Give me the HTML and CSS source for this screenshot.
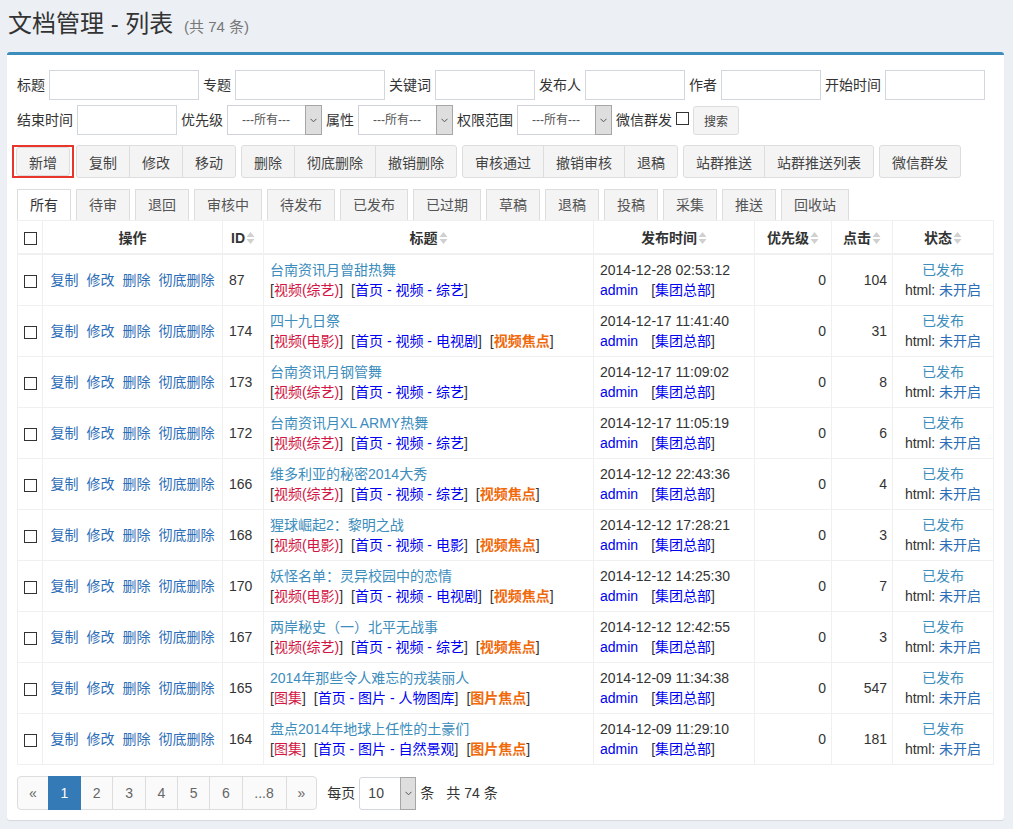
FILE: index.html
```html
<!DOCTYPE html>
<html lang="zh-CN">
<head>
<meta charset="utf-8">
<title>文档管理 - 列表</title>
<link rel="stylesheet" href="styles.css">
</head>
<body>
<div class="page">
  <h1 class="page-title">文档管理 - 列表 <small>(共 74 条)</small></h1>
  <div class="box">
    <form class="filters">
      <div class="frow">
        <label>标题</label><input class="inp w150" type="text">
        <label>专题</label><input class="inp w150" type="text">
        <label>关键词</label><input class="inp" type="text">
        <label>发布人</label><input class="inp" type="text">
        <label>作者</label><input class="inp" type="text">
        <label>开始时间</label><input class="inp" type="text">
      </div>
      <div class="frow">
        <label>结束时间</label><input class="inp" type="text">
        <label>优先级</label>
        <span class="sel"><select><option>---所有---</option></select><span class="arrow"><svg width="7" height="5" viewBox="0 0 7 5"><polyline points="0.5,0.8 3.5,3.8 6.5,0.8" fill="none" stroke="#555" stroke-width="1"/></svg></span></span>
        <label>属性</label>
        <span class="sel"><select><option>---所有---</option></select><span class="arrow"><svg width="7" height="5" viewBox="0 0 7 5"><polyline points="0.5,0.8 3.5,3.8 6.5,0.8" fill="none" stroke="#555" stroke-width="1"/></svg></span></span>
        <label>权限范围</label>
        <span class="sel"><select><option>---所有---</option></select><span class="arrow"><svg width="7" height="5" viewBox="0 0 7 5"><polyline points="0.5,0.8 3.5,3.8 6.5,0.8" fill="none" stroke="#555" stroke-width="1"/></svg></span></span>
        <label>微信群发</label><input class="chk chk-top" type="checkbox">
        <button type="button" class="btn-sm">搜索</button>
      </div>
    </form>

    <div class="toolbar">
      <span class="hl"><button type="button" class="btn btn-new">新增</button></span>
      <div class="btn-group first"><button type="button" class="btn">复制</button><button type="button" class="btn">修改</button><button type="button" class="btn">移动</button></div>
      <div class="btn-group"><button type="button" class="btn">删除</button><button type="button" class="btn">彻底删除</button><button type="button" class="btn">撤销删除</button></div>
      <div class="btn-group"><button type="button" class="btn">审核通过</button><button type="button" class="btn">撤销审核</button><button type="button" class="btn">退稿</button></div>
      <div class="btn-group"><button type="button" class="btn">站群推送</button><button type="button" class="btn">站群推送列表</button></div>
      <div class="btn-group"><button type="button" class="btn">微信群发</button></div>
    </div>

    <ul class="tabs">
      <li class="active">所有</li><li>待审</li><li>退回</li><li>审核中</li><li>待发布</li><li>已发布</li><li>已过期</li><li>草稿</li><li>退稿</li><li>投稿</li><li>采集</li><li>推送</li><li>回收站</li>
    </ul>

    <table class="grid">
      <colgroup>
        <col style="width:25px"><col style="width:180px"><col style="width:41px"><col style="width:330px"><col style="width:161px"><col style="width:77px"><col style="width:61px"><col style="width:101px">
      </colgroup>
      <thead>
        <tr>
          <th class="c-chk"><input class="chk" type="checkbox"></th>
          <th>操作</th>
          <th>ID<svg class="sort" width="9" height="14" viewBox="0 0 9 14"><polygon points="0.5,6 4.5,1 8.5,6" fill="#d0d0d0"/><polygon points="0.5,8 4.5,13 8.5,8" fill="#d0d0d0"/></svg></th>
          <th>标题<svg class="sort" width="9" height="14" viewBox="0 0 9 14"><polygon points="0.5,6 4.5,1 8.5,6" fill="#d0d0d0"/><polygon points="0.5,8 4.5,13 8.5,8" fill="#d0d0d0"/></svg></th>
          <th>发布时间<svg class="sort" width="9" height="14" viewBox="0 0 9 14"><polygon points="0.5,6 4.5,1 8.5,6" fill="#d0d0d0"/><polygon points="0.5,8 4.5,13 8.5,8" fill="#d0d0d0"/></svg></th>
          <th>优先级<svg class="sort" width="9" height="14" viewBox="0 0 9 14"><polygon points="0.5,6 4.5,1 8.5,6" fill="#d0d0d0"/><polygon points="0.5,8 4.5,13 8.5,8" fill="#d0d0d0"/></svg></th>
          <th>点击<svg class="sort" width="9" height="14" viewBox="0 0 9 14"><polygon points="0.5,6 4.5,1 8.5,6" fill="#d0d0d0"/><polygon points="0.5,8 4.5,13 8.5,8" fill="#d0d0d0"/></svg></th>
          <th>状态<svg class="sort" width="9" height="14" viewBox="0 0 9 14"><polygon points="0.5,6 4.5,1 8.5,6" fill="#d0d0d0"/><polygon points="0.5,8 4.5,13 8.5,8" fill="#d0d0d0"/></svg></th>
        </tr>
      </thead>
      <tbody>
        <tr>
          <td class="c-chk"><input class="chk" type="checkbox"></td>
          <td class="c-op"><a>复制</a><a>修改</a><a>删除</a><a>彻底删除</a></td>
          <td>87</td>
          <td><div><a class="tl">台南资讯月曾甜热舞</a></div><div>[<span class="cat">视频(综艺)</span>]<span class="sp">[<span class="chan">首页 - 视频 - 综艺</span>]</span></div></td>
          <td><div>2014-12-28 02:53:12</div><div><span class="user">admin</span><span class="org">[<span class="chan">集团总部</span>]</span></div></td>
          <td class="r">0</td>
          <td class="r">104</td>
          <td class="c"><div class="pub">已发布</div><div>html: <span class="off">未开启</span></div></td>
        </tr>
        <tr>
          <td class="c-chk"><input class="chk" type="checkbox"></td>
          <td class="c-op"><a>复制</a><a>修改</a><a>删除</a><a>彻底删除</a></td>
          <td>174</td>
          <td><div><a class="tl">四十九日祭</a></div><div>[<span class="cat">视频(电影)</span>]<span class="sp">[<span class="chan">首页 - 视频 - 电视剧</span>]</span><span class="sp">[<span class="focus">视频焦点</span>]</span></div></td>
          <td><div>2014-12-17 11:41:40</div><div><span class="user">admin</span><span class="org">[<span class="chan">集团总部</span>]</span></div></td>
          <td class="r">0</td>
          <td class="r">31</td>
          <td class="c"><div class="pub">已发布</div><div>html: <span class="off">未开启</span></div></td>
        </tr>
        <tr>
          <td class="c-chk"><input class="chk" type="checkbox"></td>
          <td class="c-op"><a>复制</a><a>修改</a><a>删除</a><a>彻底删除</a></td>
          <td>173</td>
          <td><div><a class="tl">台南资讯月钢管舞</a></div><div>[<span class="cat">视频(综艺)</span>]<span class="sp">[<span class="chan">首页 - 视频 - 综艺</span>]</span></div></td>
          <td><div>2014-12-17 11:09:02</div><div><span class="user">admin</span><span class="org">[<span class="chan">集团总部</span>]</span></div></td>
          <td class="r">0</td>
          <td class="r">8</td>
          <td class="c"><div class="pub">已发布</div><div>html: <span class="off">未开启</span></div></td>
        </tr>
        <tr>
          <td class="c-chk"><input class="chk" type="checkbox"></td>
          <td class="c-op"><a>复制</a><a>修改</a><a>删除</a><a>彻底删除</a></td>
          <td>172</td>
          <td><div><a class="tl">台南资讯月XL ARMY热舞</a></div><div>[<span class="cat">视频(综艺)</span>]<span class="sp">[<span class="chan">首页 - 视频 - 综艺</span>]</span></div></td>
          <td><div>2014-12-17 11:05:19</div><div><span class="user">admin</span><span class="org">[<span class="chan">集团总部</span>]</span></div></td>
          <td class="r">0</td>
          <td class="r">6</td>
          <td class="c"><div class="pub">已发布</div><div>html: <span class="off">未开启</span></div></td>
        </tr>
        <tr>
          <td class="c-chk"><input class="chk" type="checkbox"></td>
          <td class="c-op"><a>复制</a><a>修改</a><a>删除</a><a>彻底删除</a></td>
          <td>166</td>
          <td><div><a class="tl">维多利亚的秘密2014大秀</a></div><div>[<span class="cat">视频(综艺)</span>]<span class="sp">[<span class="chan">首页 - 视频 - 综艺</span>]</span><span class="sp">[<span class="focus">视频焦点</span>]</span></div></td>
          <td><div>2014-12-12 22:43:36</div><div><span class="user">admin</span><span class="org">[<span class="chan">集团总部</span>]</span></div></td>
          <td class="r">0</td>
          <td class="r">4</td>
          <td class="c"><div class="pub">已发布</div><div>html: <span class="off">未开启</span></div></td>
        </tr>
        <tr>
          <td class="c-chk"><input class="chk" type="checkbox"></td>
          <td class="c-op"><a>复制</a><a>修改</a><a>删除</a><a>彻底删除</a></td>
          <td>168</td>
          <td><div><a class="tl">猩球崛起2：黎明之战</a></div><div>[<span class="cat">视频(电影)</span>]<span class="sp">[<span class="chan">首页 - 视频 - 电影</span>]</span><span class="sp">[<span class="focus">视频焦点</span>]</span></div></td>
          <td><div>2014-12-12 17:28:21</div><div><span class="user">admin</span><span class="org">[<span class="chan">集团总部</span>]</span></div></td>
          <td class="r">0</td>
          <td class="r">3</td>
          <td class="c"><div class="pub">已发布</div><div>html: <span class="off">未开启</span></div></td>
        </tr>
        <tr>
          <td class="c-chk"><input class="chk" type="checkbox"></td>
          <td class="c-op"><a>复制</a><a>修改</a><a>删除</a><a>彻底删除</a></td>
          <td>170</td>
          <td><div><a class="tl">妖怪名单：灵异校园中的恋情</a></div><div>[<span class="cat">视频(电影)</span>]<span class="sp">[<span class="chan">首页 - 视频 - 电视剧</span>]</span><span class="sp">[<span class="focus">视频焦点</span>]</span></div></td>
          <td><div>2014-12-12 14:25:30</div><div><span class="user">admin</span><span class="org">[<span class="chan">集团总部</span>]</span></div></td>
          <td class="r">0</td>
          <td class="r">7</td>
          <td class="c"><div class="pub">已发布</div><div>html: <span class="off">未开启</span></div></td>
        </tr>
        <tr>
          <td class="c-chk"><input class="chk" type="checkbox"></td>
          <td class="c-op"><a>复制</a><a>修改</a><a>删除</a><a>彻底删除</a></td>
          <td>167</td>
          <td><div><a class="tl">两岸秘史（一）北平无战事</a></div><div>[<span class="cat">视频(综艺)</span>]<span class="sp">[<span class="chan">首页 - 视频 - 综艺</span>]</span><span class="sp">[<span class="focus">视频焦点</span>]</span></div></td>
          <td><div>2014-12-12 12:42:55</div><div><span class="user">admin</span><span class="org">[<span class="chan">集团总部</span>]</span></div></td>
          <td class="r">0</td>
          <td class="r">3</td>
          <td class="c"><div class="pub">已发布</div><div>html: <span class="off">未开启</span></div></td>
        </tr>
        <tr>
          <td class="c-chk"><input class="chk" type="checkbox"></td>
          <td class="c-op"><a>复制</a><a>修改</a><a>删除</a><a>彻底删除</a></td>
          <td>165</td>
          <td><div><a class="tl">2014年那些令人难忘的戎装丽人</a></div><div>[<span class="cat">图集</span>]<span class="sp">[<span class="chan">首页 - 图片 - 人物图库</span>]</span><span class="sp">[<span class="focus">图片焦点</span>]</span></div></td>
          <td><div>2014-12-09 11:34:38</div><div><span class="user">admin</span><span class="org">[<span class="chan">集团总部</span>]</span></div></td>
          <td class="r">0</td>
          <td class="r">547</td>
          <td class="c"><div class="pub">已发布</div><div>html: <span class="off">未开启</span></div></td>
        </tr>
        <tr>
          <td class="c-chk"><input class="chk" type="checkbox"></td>
          <td class="c-op"><a>复制</a><a>修改</a><a>删除</a><a>彻底删除</a></td>
          <td>164</td>
          <td><div><a class="tl">盘点2014年地球上任性的土豪们</a></div><div>[<span class="cat">图集</span>]<span class="sp">[<span class="chan">首页 - 图片 - 自然景观</span>]</span><span class="sp">[<span class="focus">图片焦点</span>]</span></div></td>
          <td><div>2014-12-09 11:29:10</div><div><span class="user">admin</span><span class="org">[<span class="chan">集团总部</span>]</span></div></td>
          <td class="r">0</td>
          <td class="r">181</td>
          <td class="c"><div class="pub">已发布</div><div>html: <span class="off">未开启</span></div></td>
        </tr>
      </tbody>
    </table>

    <div class="pager">
      <ul class="pagination">
        <li>«</li><li class="active">1</li><li>2</li><li>3</li><li>4</li><li>5</li><li>6</li><li>...8</li><li>»</li>
      </ul>
      <span class="pp-label">每页</span>
      <span class="sel sel-pp"><select><option>10</option></select><span class="arrow"><svg width="7" height="5" viewBox="0 0 7 5"><polyline points="0.5,0.8 3.5,3.8 6.5,0.8" fill="none" stroke="#555" stroke-width="1"/></svg></span></span>
      <span class="pp-unit">条</span>
      <span class="pp-total">共 74 条</span>
    </div>
  </div>
</div>
</body>
</html>
```
FILE: styles.css
```css
* { box-sizing: border-box; }

body {
  margin: 0;
  background: #ecf0f5;
  font-family: "Liberation Sans", "Noto Sans CJK SC", sans-serif;
  font-size: 14px;
  line-height: 20px;
  color: #333;
}

.page {
  padding: 7px 9px 10px 7px;
}

.page-title {
  margin: 0 0 11px 1px;
  height: 34px;
  overflow: hidden;
  font-size: 24px;
  line-height: 34px;
  font-weight: normal;
  color: #333;
}

.page-title small {
  font-size: 15px;
  line-height: 20px;
  color: #777;
  padding-left: 4px;
}

.box {
  background: #fff;
  border-top: 3px solid #3c8dbc;
  border-radius: 3px;
  box-shadow: 0 1px 1px rgba(0, 0, 0, 0.1);
  padding: 15px 10px 10px 10px;
}

/* filters */
.filters {
  margin: 0;
}

.frow {
  display: flex;
  align-items: center;
  gap: 4px;
  height: 30px;
}

.frow + .frow {
  margin-top: 5px;
}

.frow label {
  white-space: nowrap;
  color: #333;
}

.inp {
  width: 100px;
  height: 30px;
  border: 1px solid #d2d6de;
  padding: 0 6px;
  font-family: inherit;
  font-size: 14px;
  outline: none;
  margin: 0;
}

.inp.w150 { width: 150px; }

.sel {
  position: relative;
  display: inline-block;
  width: 95px;
  height: 30px;
}

.sel select {
  -webkit-appearance: none;
  appearance: none;
  width: 100%;
  height: 100%;
  border: 1px solid #cfd2da;
  background: #fff;
  border-radius: 0;
  padding: 0 0 0 14px;
  font-family: inherit;
  font-size: 12px;
  color: #555;
  margin: 0;
  outline: none;
}

.sel .arrow {
  position: absolute;
  top: 0;
  right: 0;
  bottom: 0;
  width: 17px;
  background: #dedede;
  border: 1px solid #a6a6a6;
  display: flex;
  align-items: center;
  justify-content: center;
  pointer-events: none;
}

.chk {
  -webkit-appearance: none;
  appearance: none;
  width: 13px;
  height: 13px;
  margin: 0;
  border: 1px solid #333;
  background: #fff;
  border-radius: 0;
  display: inline-block;
  vertical-align: middle;
}

.chk-top {
  align-self: flex-start;
  margin-top: 7px;
}

.btn-sm {
  height: 29px;
  padding: 0 10px;
  border: 1px solid #ddd;
  background: #f4f4f4;
  color: #444;
  font-family: inherit;
  font-size: 12px;
  border-radius: 3px;
  margin: 0;
}

/* toolbar */
.toolbar {
  display: flex;
  align-items: center;
  margin-top: 10px;
  height: 33px;
}

.hl {
  display: flex;
  align-items: center;
  height: 33px;
  margin-left: -5px;
  padding: 0 2px;
  border: 2px solid #e8362c;
}

.btn {
  height: 33px;
  padding: 0 12px;
  border: 1px solid #ddd;
  background: #f4f4f4;
  color: #444;
  font-family: inherit;
  font-size: 14px;
  border-radius: 0;
  margin: 0;
  white-space: nowrap;
}

.btn-new {
  height: 29px;
  border-radius: 3px;
}

.btn-group {
  display: flex;
  margin-left: 5px;
}

.btn-group.first { margin-left: 2px; }

.btn-group .btn + .btn { margin-left: -1px; }
.btn-group .btn:first-child { border-radius: 3px 0 0 3px; }
.btn-group .btn:last-child { border-radius: 0 3px 3px 0; }
.btn-group .btn:only-child { border-radius: 3px; }

/* tabs */
.tabs {
  list-style: none;
  display: flex;
  margin: 11px 0 0 0;
  padding: 0;
  height: 31px;
}

.tabs li {
  height: 31px;
  padding: 0 12px;
  margin-right: 5px;
  border: 1px solid #ddd;
  border-bottom: 0;
  background: #f4f4f4;
  color: #555;
  line-height: 30px;
  white-space: nowrap;
}

.tabs li.active {
  background: #fff;
  color: #333;
}

/* grid */
.grid {
  width: 976px;
  table-layout: fixed;
  border-collapse: collapse;
  border: 1px solid #f0f0f0;
}

.grid th,
.grid td {
  border: 1px solid #f0f0f0;
  padding: 5px 6px;
  line-height: 20px;
  vertical-align: middle;
  white-space: nowrap;
  overflow: hidden;
}

.grid th {
  font-weight: bold;
  text-align: center;
  padding: 7px 6px 5px;
  border-bottom: 2px solid #f0f0f0;
  color: #333;
}

.grid .sort {
  vertical-align: -2px;
  margin-left: 1px;
}

.grid .c-chk {
  text-align: center;
  padding: 0;
}

.grid .c-op {
  text-align: center;
  padding: 5px 2px;
}

.c-op a {
  color: #2c6db7;
  margin: 0 4px;
  cursor: pointer;
}

.grid .r { text-align: right; padding-right: 5px; }
.grid .c { text-align: center; }

.tl { color: #3c8dbc; cursor: pointer; }
.cat { color: #d21543; }
.chan { color: #0000f0; }
.focus { color: #f06a0c; font-weight: bold; }
.sp { margin-left: 8px; }
.user { color: #0000f0; }
.org { margin-left: 13px; }
.pub { color: #3c8dbc; }
.off { color: #2c6db7; }

/* pager */
.pager {
  display: flex;
  align-items: center;
  margin-top: 11px;
  height: 34px;
}

.pagination {
  list-style: none;
  display: flex;
  margin: 0;
  padding: 0;
}

.pagination li {
  height: 34px;
  padding: 0 11.75px;
  line-height: 32px;
  border: 1px solid #ddd;
  margin-left: -1px;
  background: #fafafa;
  color: #666;
}

.pagination li:first-child {
  margin-left: 0;
  border-radius: 4px 0 0 4px;
  padding: 0 11px;
}

.pagination li:last-child {
  border-radius: 0 4px 4px 0;
  padding: 0 11px;
}

.pagination li.active {
  background: #337ab7;
  border-color: #337ab7;
  color: #fff;
  position: relative;
}

.pp-label { margin-left: 10px; }

.sel-pp {
  width: 57px;
  height: 33px;
  margin-left: 4px;
}

.sel-pp select {
  font-size: 14px;
  color: #444;
  padding-left: 8px;
  border-color: #d2d6de;
  border-radius: 3px;
}

.sel-pp .arrow { width: 16px; }

.pp-unit { margin-left: 4px; }
.pp-total { margin-left: 12px; }
```
